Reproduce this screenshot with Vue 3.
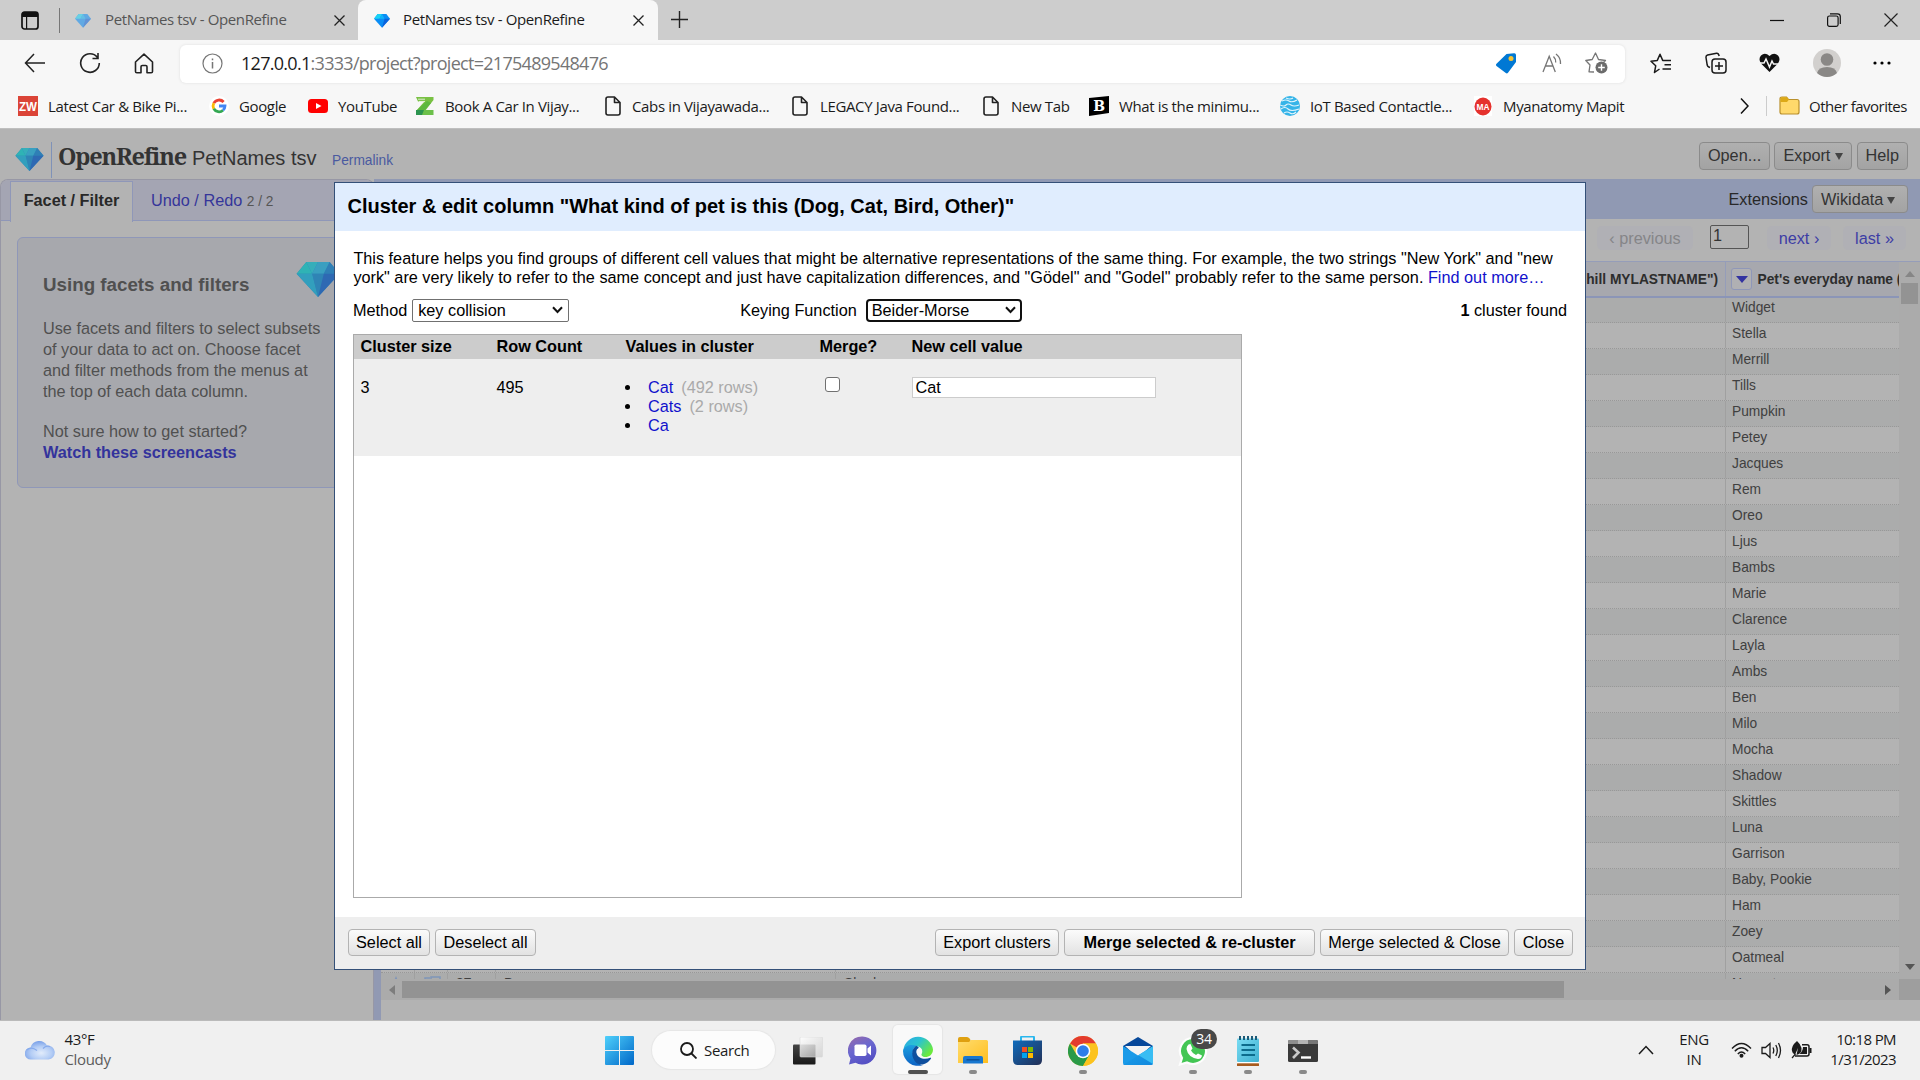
<script setup>
const bookmarks = [
  { icon: 'zw', label: 'Latest Car & Bike Pi...', w: 191, s: 30 },
  { icon: 'google', label: 'Google', w: 99, s: 30 },
  { icon: 'youtube', label: 'YouTube', w: 108, s: 30 },
  { icon: 'zed', label: 'Book A Car In Vijay...', w: 189, s: 29 },
  { icon: 'page', label: 'Cabs in Vijayawada...', w: 187, s: 27 },
  { icon: 'page', label: 'LEGACY Java Found...', w: 191, s: 28 },
  { icon: 'page', label: 'New Tab', w: 106, s: 28 },
  { icon: 'bee', label: 'What is the minimu...', w: 191, s: 30 },
  { icon: 'iot', label: 'IoT Based Contactle...', w: 194, s: 30 },
  { icon: 'ma', label: 'Myanatomy Mapit', w: 180, s: 29 },
]
const pets = ['Widget', 'Stella', 'Merrill', 'Tills', 'Pumpkin', 'Petey', 'Jacques', 'Rem', 'Oreo', 'Ljus', 'Bambs', 'Marie', 'Clarence', 'Layla', 'Ambs', 'Ben', 'Milo', 'Mocha', 'Shadow', 'Skittles', 'Luna', 'Garrison', 'Baby, Pookie', 'Ham', 'Zoey', 'Oatmeal', 'Nugget']
const values = [
  { name: 'Cat', rows: '(492 rows)' },
  { name: 'Cats', rows: '(2 rows)' },
  { name: 'Ca', rows: '' },
]
</script>

<template>
  <div class="screen">
    <svg class="defs" width="0" height="0">
      <defs>
        <symbol id="gem" viewBox="0 0 44 36">
          <path d="M10 0H34L44 12 22 36 0 12z" fill="#2f86b8" />
          <path d="M10 0 16 12H0z" fill="#2fb3b5" /><path d="M10 0H22L16 12z" fill="#36aeba" />
          <path d="M22 0H34L28 12H16z" fill="#3a9fc0" /><path d="M34 0 44 12H28z" fill="#2f7fb6" />
          <path d="M0 12H16L22 36z" fill="#329fbd" /><path d="M16 12H28L22 36z" fill="#2f84b5" />
          <path d="M28 12H44L22 36z" fill="#2e69b3" />
        </symbol>
        <symbol id="favgem" viewBox="0 0 44 40">
          <path d="M10 2H34L44 15 22 40 0 15z" fill="#0a8df5" />
          <path d="M10 2 0 15H15L22 2z" fill="#19d3f5" /><path d="M22 2 15 15H29z" fill="#10b4f8" />
          <path d="M29 15H44L22 40z" fill="#0b63dc" />
        </symbol>
        <linearGradient id="gWin" x1="0" y1="0" x2="1" y2="1"><stop offset="0" stop-color="#4fd0fb" /><stop offset="1" stop-color="#0067c8" /></linearGradient>
        <linearGradient id="gTask" x1="0" y1="0" x2="0" y2="1"><stop offset="0" stop-color="#444" /><stop offset="1" stop-color="#191919" /></linearGradient>
        <linearGradient id="gPane" x1="0" y1="0" x2="1" y2="1"><stop offset="0" stop-color="#fff" stop-opacity=".9" /><stop offset="1" stop-color="#ccc" stop-opacity=".7" /></linearGradient>
        <linearGradient id="gChat" x1="0" y1="0" x2=".5" y2="1"><stop offset="0" stop-color="#9a6aa8" /><stop offset=".5" stop-color="#6a67cf" /><stop offset="1" stop-color="#5550c4" /></linearGradient>
        <linearGradient id="gEdge" x1="0" y1="0" x2="1" y2=".6"><stop offset="0" stop-color="#2aa7e6" /><stop offset=".5" stop-color="#2cc3cf" /><stop offset="1" stop-color="#6bea3c" /></linearGradient>
        <linearGradient id="gEdge2" x1="0" y1="0" x2="0" y2="1"><stop offset="0" stop-color="#1ca0e0" /><stop offset="1" stop-color="#0d62c4" /></linearGradient>
        <linearGradient id="gFold" x1="0" y1="0" x2="1" y2="1"><stop offset="0" stop-color="#ffdc6e" /><stop offset="1" stop-color="#ffbe1e" /></linearGradient>
        <linearGradient id="gStore" x1="0" y1="0" x2="1" y2="1"><stop offset="0" stop-color="#0f6cbd" /><stop offset="1" stop-color="#232f55" /></linearGradient>
        <linearGradient id="gMail" x1="0" y1="0" x2="1" y2="1"><stop offset="0" stop-color="#1aa2ec" /><stop offset="1" stop-color="#1288dd" /></linearGradient>
        <linearGradient id="gNote" x1="0" y1="0" x2="1" y2="1"><stop offset="0" stop-color="#79dcf3" /><stop offset="1" stop-color="#3fb0d0" /></linearGradient>
        <radialGradient id="gCloud" cx=".55" cy=".65" r=".7"><stop offset="0" stop-color="#e2ecfb" /><stop offset=".5" stop-color="#b4cdf5" /><stop offset="1" stop-color="#6e98e6" /></radialGradient>
      </defs>
    </svg>

    <header class="tabbar">
      <svg class="ws" width="18" height="19" viewBox="0 0 18 19"><rect x="1" y="1" width="16" height="17" rx="2.5" fill="none" stroke="#111" stroke-width="1.7" /><path d="M1 5V3q0-2 2-2h12q2 0 2 2v3H1zM5 6h1.200v12H5z" fill="#111" /></svg>
      <i class="tabsep"></i>
      <div class="tab idle">
        <svg width="16" height="15" opacity=".55"><use href="#favgem" /></svg><span>PetNames tsv - OpenRefine</span>
        <svg class="x" width="11" height="11" viewBox="0 0 11 11"><path d="M.5.5l10 10M10.500.5l-10 10" stroke="#222" stroke-width="1.300" /></svg>
      </div>
      <div class="tab live">
        <svg width="16" height="15"><use href="#favgem" /></svg><span>PetNames tsv - OpenRefine</span>
        <svg class="x" width="11" height="11" viewBox="0 0 11 11"><path d="M.5.5l10 10M10.500.5l-10 10" stroke="#222" stroke-width="1.300" /></svg>
      </div>
      <svg class="plus" width="17" height="17" viewBox="0 0 17 17"><path d="M8.500 0v17M0 8.500h17" stroke="#222" stroke-width="1.400" /></svg>
      <div class="winctl">
        <svg width="14" height="14" viewBox="0 0 14 14"><path d="M0 7.500h14" stroke="#111" stroke-width="1.200" /></svg>
        <svg width="14" height="14" viewBox="0 0 14 14" fill="none" stroke="#111" stroke-width="1.200"><rect x=".6" y="3" width="10.500" height="10.400" rx="1.800" /><path d="M3 .8h7.500q2.800 0 2.800 2.800V11" /></svg>
        <svg width="14" height="14" viewBox="0 0 14 14"><path d="M.5.5l13 13M13.500.5l-13 13" stroke="#222" stroke-width="1.200" /></svg>
      </div>
    </header>

    <div class="toolbar">
      <div class="nav">
        <svg width="22" height="20" viewBox="0 0 22 20" fill="none" stroke="#222" stroke-width="1.500"><path d="M21 10H1.500M10 1 1.500 10 10 19" /></svg>
        <svg width="22" height="22" viewBox="0 0 22 22" fill="none" stroke="#222" stroke-width="1.600"><path d="M18.500 5.500A9.300 9.300 0 1 0 20.300 11M19 1v5.500h-5.500" /></svg>
        <svg width="20" height="21" viewBox="0 0 20 21" fill="none" stroke="#222" stroke-width="1.600" stroke-linejoin="round"><path d="M1.500 9 10 1.200 18.500 9v9.500q0 1.300-1.300 1.300H13v-6q0-1.300-1.300-1.300H8.300Q7 12.500 7 13.800v6H2.800q-1.300 0-1.300-1.300z" /></svg>
      </div>
      <div class="address">
        <svg width="21" height="21" viewBox="0 0 21 21" fill="none" stroke="#767676" stroke-width="1.200"><circle cx="10.500" cy="10.500" r="9.500" /><path d="M10.500 9v6.500M10.500 5.500v1.800" stroke-width="1.500" /></svg>
        <span class="url"><b>127.0.0.1</b>:3333/project?project=2175489548476</span>
        <svg class="tag" width="22" height="21" viewBox="0 0 22 21"><path d="M11.500 1 19 .2q2-.2 2 1.800V9L13 19.800q-1 1.300-2.200.3L1.500 13q-1-1 0-2.200z" fill="#0078d4" /><circle cx="16" cy="5.500" r="2.500" fill="#f5c433" /></svg>
        <svg width="20" height="20" viewBox="0 0 20 20" fill="none" stroke="#767676" stroke-width="1.300"><path d="M1 19 7.200 3.200 13.300 19M3.300 13h8M11.500 3.500q2.500 2.500 2.200 6M14 1q5 4 4.500 10" /></svg>
        <svg class="fav" width="23" height="22" viewBox="0 0 23 22"><path d="M9 20 4 19.800 5 13 .8 8.500 7.200 7.500 10.500 1 13.500 7.500 20.500 8.500 18 11" fill="none" stroke="#767676" stroke-width="1.300" stroke-linejoin="round" /><circle cx="16.500" cy="15.500" r="6" fill="#6b6b6b" /><path d="M16.500 12.200v6.600M13.200 15.500h6.600" stroke="#fff" stroke-width="1.400" /></svg>
      </div>
      <div class="tools">
        <svg width="22" height="21" viewBox="0 0 22 21" fill="none" stroke="#1b1b1b" stroke-width="1.500" stroke-linejoin="round"><path d="M9.500 16 4.500 19.500 5.700 12.800 1 8.300 7.300 7.400 10 1.200 12.700 7.400H21M14.500 11.800H21M12.500 16H21" /></svg>
        <svg width="22" height="22" viewBox="0 0 22 22" fill="none" stroke="#1b1b1b" stroke-width="1.500"><rect x="7" y="7" width="14" height="14" rx="3" /><path d="M14 10v8M10 14h8M5 15.500 3.800 15Q2.500 14.500 2.200 13L1 5.500Q.8 3.500 2.600 3L11.500 1.200Q13.500 1 14.200 4" /></svg>
        <svg width="21" height="20" viewBox="0 0 21 20"><path d="M10.500 19 2 10.500Q-1 6 2 2.500 6-1 10.500 3 15-1 19 2.500 22 6 19 10.500z" fill="#111" /><path d="M0 10h5l2-4 3.500 8 2.500-6 1.500 3H21" fill="none" stroke="#f7f7f7" stroke-width="1.500" /></svg>
        <svg width="28" height="28" viewBox="0 0 28 28"><circle cx="14" cy="14" r="14" fill="#d2d0ce" /><circle cx="14" cy="10.500" r="6.300" fill="#8a8886" /><path d="M4 24Q5.500 18 14 18t10 6q-4.500 4-10 4T4 24z" fill="#8a8886" /></svg>
        <svg width="18" height="4" viewBox="0 0 18 4"><circle cx="2" cy="2" r="1.600" /><circle cx="9" cy="2" r="1.600" /><circle cx="16" cy="2" r="1.600" /></svg>
      </div>
    </div>

    <nav class="bookmarks">
      <div v-for="b in bookmarks" :key="b.label" class="bm" :style="{ width: b.w + 'px' }">
        <span class="bicon" :style="{ width: b.s + 'px' }">
          <svg v-if="b.icon === 'zw'" width="20" height="20"><rect width="20" height="20" fill="#db4437" /><text x="10" y="14.500" text-anchor="middle" textLength="18" lengthAdjust="spacingAndGlyphs" class="logo" fill="#fff" font-size="13">ZW</text></svg>
          <svg v-else-if="b.icon === 'google'" width="20" height="20" viewBox="0 0 20 20"><circle cx="10" cy="10" r="10" fill="#fff" /><g fill="none" stroke-width="2.800"><path d="M14.600 6A6 6 0 0 0 4.800 7.200" stroke="#ea4335" /><path d="M4.800 7.200a6 6 0 0 0 0 5.600" stroke="#fbbc05" /><path d="M4.800 12.800a6 6 0 0 0 9.200 1.500" stroke="#34a853" /><path d="M14 14.300A6 6 0 0 0 16 10h-6" stroke="#4285f4" /></g></svg>
          <svg v-else-if="b.icon === 'youtube'" width="21" height="20" viewBox="0 0 21 20"><rect y="3" width="20" height="14" rx="3.500" fill="#f00" /><path d="M8 7v6l5.500-3z" fill="#fff" /></svg>
          <svg v-else-if="b.icon === 'zed'" width="19" height="18" viewBox="0 0 19 18"><path d="M0 0h17.500v3L9 14H0L8.500 4.500H2z" fill="#79c143" /><path d="M2 2.200h7M3 4.400h6" stroke="#f7f7f7" stroke-width=".8" /><path d="M11 4 0 14v4h11v-4H8l7-8z" fill="#5db83f" /><path d="M0 13h8v5H0z" fill="#2c9450" /><path d="M8 13h9.500v5H6z" fill="#6cc04a" /></svg>
          <svg v-else-if="b.icon === 'page'" width="16" height="20" viewBox="0 0 16 20" fill="none" stroke="#222" stroke-width="1.600" stroke-linejoin="round"><path d="M3 1h6.500L15 6.500V17q0 2-2 2H3q-2 0-2-2V3q0-2 2-2zM9.500 1v5.500H15" /></svg>
          <svg v-else-if="b.icon === 'bee'" width="20" height="20" viewBox="0 0 20 20"><path d="M0 2 20 0V17L0 20z" fill="#000" /><text x="10" y="15" text-anchor="middle" class="slab" fill="#fff" font-size="14">B</text></svg>
          <svg v-else-if="b.icon === 'iot'" width="20" height="20" viewBox="0 0 20 20"><circle cx="10" cy="10" r="10" fill="#35b4e8" /><path d="M2 5q4-2 7 0t8-1M0 9q4 2 6 0t5 0 8 0M1 13q4-3 7 0t11 0M4 17q3-2 6 0t6-1M6 2q4 2 7 0" fill="none" stroke="#e3f5fc" stroke-width="1.100" /></svg>
          <svg v-else width="18" height="20" viewBox="0 0 18 20"><rect width="18" height="20" fill="#fff" /><ellipse cx="9" cy="10.500" rx="8.500" ry="9" fill="#e5312d" /><text x="9" y="14" text-anchor="middle" class="logo" fill="#fff" font-size="9.500" textLength="13" lengthAdjust="spacingAndGlyphs">MA</text></svg>
        </span><span>{{ b.label }}</span>
      </div>
      <svg class="more" width="9" height="16" viewBox="0 0 9 16"><path d="M1 .5 8 8 1 15.500" fill="none" stroke="#111" stroke-width="1.500" /></svg>
      <i class="bmsep"></i>
      <svg class="bfold" width="21" height="19" viewBox="0 0 21 19"><path d="M1 3q0-2 2-2h4.500l2 2.500H18q2 0 2 2V16q0 2-2 2H3q-2 0-2-2z" fill="#ffd96b" stroke="#b9902c" stroke-width="1.200" /><path d="M1.500 6H8l2-2.500L8 1.200H3Q1.500 1.200 1.500 3z" fill="#dca918" /></svg>
      <span class="other">Other favorites</span>
    </nav>

    <main class="page">
      <div class="apphead">
        <svg class="biggem" width="29" height="23"><use href="#gem" width="29" height="23" /></svg>
        <i class="rule"></i>
        <span class="brand">OpenRefine</span>
        <span class="project">PetNames tsv</span>
        <span class="perma">Permalink</span>
        <div class="headbtns">
          <span class="dbtn">Open...</span><span class="dbtn">Export <i class="tri"></i></span><span class="dbtn">Help</span>
        </div>
      </div>

      <div class="body">
        <aside class="left">
          <div class="ltabs">
            <div class="facet">Facet / Filter</div>
            <div class="undo">Undo / Redo <small>2 / 2</small></div>
          </div>
          <div class="help">
            <h2>Using facets and filters</h2>
            <svg class="helpgem" width="44" height="35"><use href="#gem" width="44" height="35" /></svg>
            <p>Use facets and filters to select subsets<br>of your data to act on. Choose facet<br>and filter methods from the menus at<br>the top of each data column.</p>
            <p class="p2">Not sure how to get started?<br><b>Watch these screencasts</b></p>
          </div>
        </aside>
        <div class="splitter"></div>
        <section class="right">
          <div class="band"><span>Extensions</span><span class="dbtn wiki">Wikidata <i class="tri"></i></span></div>
          <div class="pager">
            <span class="pg prev">‹ previous</span><span class="pin">1</span><span class="pg next">next ›</span><span class="pg last">last »</span>
          </div>
          <div class="grid">
            <div class="table">
              <div class="thead">
                <div class="c1">hill MYLASTNAME")</div>
                <div class="c2"><i class="dd"><i></i></i><span>Pet's everyday name (</span></div>
              </div>
              <div class="rows">
                <div v-for="(p, i) in pets" :key="p" class="row" :class="{ odd: i % 2 === 0 }">
                  <div class="r0"><svg v-if="i === 26" width="14" height="14" viewBox="0 0 14 14"><path d="M7 0l2 5h5l-4 3 2 6-5-4-5 4 2-6-4-3h5z" fill="#7f95b8" /></svg></div>
                  <div class="r1"><svg v-if="i === 26" width="18" height="14" viewBox="0 0 18 14"><path d="M1 13V2h5M7 5V1h9v5" fill="none" stroke="#7f95b8" stroke-width="1.500" /></svg></div>
                  <div class="r2"><template v-if="i === 26">27.</template></div><div class="r3"><template v-if="i === 26">Dog</template></div><div class="r4"><template v-if="i === 26">Shadow</template></div>
                  <div class="r5">{{ p }}</div>
                </div>
              </div>
            </div>
            <div class="vbar"><i class="up"></i><i class="vthumb"></i><i class="down"></i></div>
          </div>
          <div class="hbar"><i class="la"></i><i class="hthumb"></i><i class="ra"></i><i class="corner"></i></div>
        </section>
      </div>

      <div class="modal">
        <div class="mtitle">Cluster &amp; edit column "What kind of pet is this (Dog, Cat, Bird, Other)"</div>
        <div class="mbody">
          <p class="intro">This feature helps you find groups of different cell values that might be alternative representations of the same thing. For example, the two strings "New York" and "new<br>york" are very likely to refer to the same concept and just have capitalization differences, and "Gödel" and "Godel" probably refer to the same person. <a>Find out more…</a></p>
          <div class="opts">
            <span>Method</span>
            <span class="sel">key collision<svg width="11" height="8" viewBox="0 0 11 8"><path d="M1 1.200 5.500 6 10 1.200" fill="none" stroke="#111" stroke-width="2" /></svg></span>
            <span class="kf">Keying Function</span>
            <span class="sel focus">Beider-Morse<svg width="11" height="8" viewBox="0 0 11 8"><path d="M1 1.200 5.500 6 10 1.200" fill="none" stroke="#111" stroke-width="2" /></svg></span>
            <span class="found"><b>1</b> cluster found</span>
          </div>
          <div class="ctable">
            <div class="chead"><span>Cluster size</span><span>Row Count</span><span>Values in cluster</span><span>Merge?</span><span>New cell value</span></div>
            <div class="crow">
              <span>3</span><span>495</span>
              <ul><li v-for="v in values" :key="v.name"><a>{{ v.name }}</a><em>{{ v.rows }}</em></li></ul>
              <span><i class="check"></i></span>
              <span class="cin">Cat</span>
            </div>
          </div>
        </div>
        <div class="mfoot">
          <span class="btn b1">Select all</span><span class="btn b2">Deselect all</span>
          <span class="btn b3">Export clusters</span><span class="btn b4">Merge selected &amp; re-cluster</span><span class="btn b5">Merge selected &amp; Close</span><span class="btn b6">Close</span>
        </div>
      </div>
    </main>

    <footer class="taskbar">
      <div class="weather">
        <svg width="30" height="20" viewBox="0 0 30 20"><path d="M6 19.500a6 6 0 0 1-.5-12A9 9 0 0 1 22 5.500a7 7 0 0 1 1.500 14z" fill="url(#gCloud)" /><path d="M1.500 10q5-4 10.500.5M18 8.500q3-3.500 7-2" fill="none" stroke="#86aaec" stroke-width="1.200" /></svg>
        <div><span>43°F</span><span class="dim">Cloudy</span></div>
      </div>
      <div class="apps">
        <div class="app win"><svg width="29" height="29" viewBox="0 0 29 29"><path d="M1 0h13v14H0V1q0-1 1-1zM15 0h13q1 0 1 1v13H15zM0 15h14v14H1q-1 0-1-1zM15 15h14v13q0 1-1 1H15z" fill="url(#gWin)" /></svg></div>
        <div class="search"><svg width="17" height="17" viewBox="0 0 17 17" fill="none" stroke="#1b1b1b" stroke-width="1.800"><circle cx="7" cy="7" r="6" /><path d="M11.500 11.500 16.500 16.500" /></svg>Search</div>
        <div class="app"><svg width="30" height="28" viewBox="0 0 30 28"><rect y="7.500" width="22.500" height="20" rx="1" fill="url(#gTask)" /><rect x="7" width="22.500" height="20" rx="1" fill="url(#gPane)" stroke="#d8d8d8" stroke-width=".6" /></svg></div>
        <div class="app"><svg width="29" height="29" viewBox="0 0 29 29"><path d="M14.500.5a14 14 0 1 1-7 26.200L1 28.500l1.500-6A14 14 0 0 1 14.500.5z" fill="url(#gChat)" /><rect x="6.500" y="8.500" width="12" height="11.500" rx="1.800" fill="#fff" /><path d="M19.500 12.500 23 9.500v10l-3.500-3z" fill="#fff" /></svg></div>
        <div class="app cur"><svg width="30" height="30" viewBox="0 0 30 30"><path d="M.3 14A15 15 0 0 1 30 13.500C30 18.500 26 21 22.500 21S17.700 19.200 18.800 17.500C20.500 14.500 18 10 12 10 6 9.500 1.500 12 .3 16z" fill="url(#gEdge)" /><path d="M0 15C1.500 8.500 9 8 13.500 9.800 9.500 12 9 17 11 21.500 13 26 18 29.500 20 29A15 15 0 0 1 0 15z" fill="url(#gEdge2)" /><path d="M13 9.800C7.500 14 8.500 22 13 26.500 18 31 25 27.500 28 22.500c.3-.8-.3-1-.8-.8C22 24 14.500 22.500 13.500 17c-.3-2 .8-4 2.500-5q-1-1.700-3-2.200z" fill="#0f4f9e" /><path d="M14 13.200Q18 10.500 18.900 14.500 19 16.300 18 18q-.5 2 2.500 2.900-7-.4-7-6.200z" fill="#f8f8f8" /></svg><i class="bar"></i></div>
        <div class="app"><svg width="30" height="27" viewBox="0 0 30 27"><path d="M0 2q0-2 2-2h7q1.500 0 2.500 1.500L12.500 3V8H0z" fill="#dfa010" /><path d="M0 5h11l2-2h15.500q1.500 0 1.500 1.500V26H0z" fill="url(#gFold)" /><path d="M5 26.500V21q0-2 2-2h16q2 0 2 2v5.500z" fill="#1877cf" /><path d="M8.500 22.800h13" stroke="#0c4f94" stroke-width="1.400" /></svg><i class="dot"></i></div>
        <div class="app"><svg width="29" height="29" viewBox="0 0 29 29"><path d="M8 6V1.500q0-1 1-1h11q1 0 1 1V6" fill="none" stroke="#29b7ee" stroke-width="2" /><path d="M0 4.500h29V24q0 5-5 5H5q-5 0-5-5z" fill="url(#gStore)" /><rect x="9" y="11" width="5" height="5" fill="#f25022" /><rect x="15" y="11" width="5" height="5" fill="#7fba00" /><rect x="9" y="17" width="5" height="5" fill="#00a4ef" /><rect x="15" y="17" width="5" height="5" fill="#ffb900" /></svg></div>
        <div class="app"><svg width="30" height="30" viewBox="0 0 30 30"><circle cx="15" cy="15" r="15" fill="#fcc934" /><path d="M15 15 2 7.500A15 15 0 0 1 28 7.500H15z" fill="#e33b2e" /><path d="M2 7.500A15 15 0 0 0 15 30L21.500 18.700 15 15 8.500 18.700z" fill="#2a9a47" /><path d="M15 30A15 15 0 0 0 28 7.500H15l6.500 11.300z" fill="#fcc31e" /><circle cx="15" cy="15" r="7.300" fill="#fff" /><circle cx="15" cy="15" r="5.800" fill="#2f7de9" /></svg><i class="dot"></i></div>
        <div class="app"><svg width="30" height="28" viewBox="0 0 30 28"><path d="M0 9 15 0 30 9V14H0z" fill="#07489a" /><path d="M2 9h26L15 21z" fill="#f4f4f4" /><path d="M0 9 30 28H2q-2 0-2-2z" fill="#1a9ae8" /><path d="M30 9 0 28H28q2 0 2-2z" fill="url(#gMail)" /><path d="M30 9 15.500 18.300 30 27z" fill="#38bdf3" /></svg></div>
        <div class="app"><svg width="30" height="30" viewBox="0 0 30 30"><path d="M15 2A13 13 0 1 1 9 26.500L2 28.500 4 22A13 13 0 0 1 15 2z" fill="#43c654" stroke="#fdfdfd" stroke-width="2.200" /><path d="M10.500 8.500 12.500 8 14.500 12.500 13 14.500Q15 18 18 19L20 17.500 24 19.500Q23.500 23 20 23 10 21.500 8.500 13 8.500 10 10.500 8.500z" fill="#fff" /></svg><b class="badge">34</b><i class="dot"></i></div>
        <div class="app"><svg width="22" height="30" viewBox="0 0 22 30"><rect y="27" width="22" height="3" rx=".5" fill="#a75b1f" /><rect y="25" width="22" height="2.300" fill="#fff" /><rect y="2.500" width="22" height="23.500" rx="1" fill="url(#gNote)" /><path d="M4.500 9h13.500M4.500 14h13.500M4.500 19h13.500" stroke="#0c6c8c" stroke-width="1.800" /><path d="M3 0v4M7 0v4M11 0v4M15 0v4M19 0v4" stroke="#1b5a78" stroke-width="2" /></svg><i class="dot"></i></div>
        <div class="app"><svg width="30" height="22" viewBox="0 0 30 22"><rect width="30" height="22" rx="1.500" fill="#3a3a3a" /><path d="M0 4V1.500Q0 0 1.500 0H10v4z" fill="#8e8e8e" /><path d="M10 0h10v4H10z" fill="#b4b4b4" /><path d="M20 0h8.500Q30 0 30 1.500V4H20z" fill="#777" /><path d="M5 7.500 10.500 12.500 5 18" fill="none" stroke="#c9c9c9" stroke-width="2.600" /><path d="M13 17.500h10" stroke="#fff" stroke-width="2.400" /></svg><i class="dot"></i></div>
      </div>
      <div class="tray">
        <svg class="chev" width="16" height="10" viewBox="0 0 16 10"><path d="M1 9 8 1.500 15 9" fill="none" stroke="#1b1b1b" stroke-width="1.500" /></svg>
        <div class="lang"><span>ENG</span><span>IN</span></div>
        <svg class="wifi" width="21" height="16" viewBox="0 0 21 16" fill="none" stroke="#1b1b1b" stroke-width="1.400"><path d="M1 6.500q9.500-10 19 0M3.800 9.300q6.700-7 13.400 0M6.800 12q3.700-4 7.400 0" /><circle cx="10.500" cy="13.800" r="1.300" fill="#1b1b1b" /></svg>
        <svg class="vol" width="21" height="17" viewBox="0 0 21 17" fill="none" stroke="#1b1b1b" stroke-width="1.300"><path d="M1 5.500h3.500L9 1.500v14L4.500 11.500H1zM12 5.500q1.500 3 0 6M14.800 3q3 5.500 0 11M17.500 1q4 7.500 0 15" /></svg>
        <svg class="bat" width="21" height="18" viewBox="0 0 21 18"><path d="M11 3.800h5q2 0 2 2V13q0 2-2 2H4" fill="none" stroke="#1b1b1b" stroke-width="1.500" /><path d="M18.500 7H20.500v5h-2zM12 6h4v7H8.500Q12 10 12 6z" fill="#1b1b1b" /><path d="M6 0Q0 5 1 10q.4 2.800 3 3.800L7 7 5.500 14Q11 12.500 10.500 7 9.500 3 6 0z" fill="#1b1b1b" /><path d="M1 17 4.500 13" stroke="#1b1b1b" stroke-width="1.200" /></svg>
        <div class="clock"><span>10:18 PM</span><span>1/31/2023</span></div>
      </div>
    </footer>
  </div>
</template>

<style>
body { margin: 0; overflow: hidden; }
</style>

<style scoped>
* { box-sizing: border-box; }
i, em { font-style: normal; }
svg { display: block; flex: none; }
.screen { width: 1920px; height: 1080px; display: flex; flex-direction: column; overflow: hidden; font-family: "Open Sans", "Noto Sans", sans-serif; color: #1b1b1b; white-space: nowrap; }
.defs { position: absolute; }
.logo { font-family: "Liberation Sans", sans-serif; font-weight: bold; letter-spacing: 0; }
.slab { font-family: "DejaVu Serif", serif; font-weight: bold; }

.tabbar { height: 40px; background: #cdcdcd; display: flex; align-items: center; font-size: 15px; letter-spacing: -.38px; flex: none; }
.ws { margin-left: 21px; }
.tabsep { width: 1px; height: 25px; background: #777; margin-left: 20px; }
.tab { display: flex; align-items: center; height: 40px; }
.tab span { margin: -2px 0 0 14px; flex: 1; }
.tab .x { margin-right: 13px; }
.idle { width: 298px; padding-left: 15px; color: #555; }
.live { width: 300px; padding-left: 15px; background: #f7f7f7; border-radius: 8px 8px 0 0; }
.live svg:first-child { margin-right: -1px; margin-left: 1px; }
.live .x { margin-right: 14px; }
.plus { margin-left: 13px; margin-top: -2px; }
.winctl { margin-left: auto; display: flex; gap: 43px; margin: -1px 22px 0 auto; }

.toolbar { height: 46px; background: #f7f7f7; display: flex; align-items: center; flex: none; }
.nav { width: 180px; display: flex; padding-left: 24px; gap: 33px; align-items: center; }
.address { width: 1445px; height: 38px; border-radius: 6px; background: #fff; box-shadow: 0 0 3px #ddd; display: flex; align-items: center; padding: 0 17px 0 22px; margin-top: 2px; }
.address > * { position: relative; top: -1px; }
.url { margin-left: 18px; font-size: 18px; letter-spacing: -.71px; color: #757575; }
.url b { font-weight: 400; color: #1b1b1b; }
.address .tag { margin-left: auto; }
.address svg + svg { margin-left: 25px; }
.address .fav { margin-left: 23px; }
.tools { display: flex; align-items: center; margin-left: 25px; gap: 32.500px; }

.bookmarks { height: 43px; background: #f7f7f7; border-bottom: 1px solid #bfbfbf; display: flex; align-items: center; font-size: 15px; letter-spacing: -.36px; padding-left: 18px; flex: none; padding-bottom: 3px; }
.bm { display: flex; align-items: center; flex: none; }
.bicon { display: block; flex: none; }
.more { margin-left: 86px; }
.bmsep { width: 1px; height: 20px; background: #ccc; margin-left: 17px; }
.bfold { margin-left: 12px; }
.other { margin-left: 9px; letter-spacing: -.5px; }

.page { height: 891px; position: relative; background: #b3b3b3; font-family: "Liberation Sans", Arial, sans-serif; font-size: 16.25px; flex: none; display: flex; flex-direction: column; overflow: hidden; }
.apphead { height: 50px; display: flex; align-items: center; flex: none; }
.biggem { margin: 11px 0 0 15px; }
.rule { width: 1px; height: 36px; background: #7f92b8; margin: 12px 0 0 7px; }
.brand { font-family: "Noto Serif", "DejaVu Serif Condensed", "DejaVu Serif", serif; font-stretch: condensed; font-weight: bold; font-size: 23.500px; color: #333; margin: 4px 0 0 6px; width: 134px; letter-spacing: -1.200px; }
.project { font-size: 20px; color: #333; margin-top: 8px; width: 140px; }
.perma { font-size: 13.75px; color: #4a5aa0; margin-top: 12px; }
.headbtns { margin: 3px 12px 0 auto; display: flex; gap: 4.200px; }
.dbtn { height: 28px; border: 1px solid #8b8b8b; border-radius: 4px; background: linear-gradient(#b0b0b0, #a3a3a3); color: #333; padding: 0 8px; display: inline-flex; align-items: center; }
.tri { border: 4.500px solid transparent; border-top: 7px solid #444; border-bottom: 0; margin: 2px 0 0 5px; }

.body { flex: 1; display: flex; min-height: 0; }
.left { width: 374px; border: 1px solid #9797a5; border-bottom: 0; border-radius: 8px 8px 0 0; overflow: hidden; flex: none; }
.ltabs { height: 41px; background: #a4a5b3; border-bottom: 1px solid #8f97b8; display: flex; padding-left: 9px; }
.facet { width: 123px; height: 41px; background: #b3b3b3; border: 1px solid #8f97b8; border-bottom: 0; font-weight: bold; color: #282828; display: flex; align-items: center; justify-content: center; padding-bottom: 3px; margin-top: 1px; }
.undo { color: #35359a; padding: 11px 0 0 18px; }
.undo small { font-size: 13.75px; color: #555; }
.help { margin: 16px -8px 0 16px; height: 251px; border: 1px solid #8f97b8; border-radius: 6px; background: #a7a8ad; padding: 0 25px; color: #505050; position: relative; line-height: 21.130px; }
.help h2 { font-size: 18.750px; margin: 0; padding-top: 36px; line-height: 22px; }
.helpgem { position: absolute; left: 278px; top: 24px; }
.help p { margin: 22px 0 0; }
.help .p2 { margin-top: 18px; }
.help b { color: #33339c; }
.splitter { width: 7px; background: #9199b3; flex: none; }
.right { flex: 1; min-width: 0; display: flex; flex-direction: column; }
.band { height: 40px; background: #9099b3; display: flex; align-items: center; justify-content: flex-end; padding-right: 12px; color: #282828; gap: 4px; }
.wiki { padding: 0 0 0 8px; width: 96px; }
.wiki .tri { margin-left: 4px; }
.pager { height: 43px; display: flex; align-items: center; justify-content: flex-end; padding: 0 14px 5px 0; border-bottom: 1px solid #959db9; flex: none; }
.pg { height: 24px; line-height: 25px; background: #b0b0b5; border-radius: 5px; color: #3d3da5; text-align: center; }
.prev { width: 96px; color: #858588; }
.next { width: 64px; }
.last { width: 63px; margin-left: 12px; }
.pin { width: 39px; height: 24px; border: 1px solid #555; margin: -1px 18px 0 17px; padding: 0 2px; color: #333; border-radius: 2px; }
.grid { height: 717px; display: flex; flex: none; }
.table { width: 1518px; overflow: hidden; }
.thead { height: 36px; background: #a7a8ae; border-bottom: 2px solid #8b95b7; display: flex; justify-content: flex-end; align-items: stretch; font-size: 13.75px; font-weight: bold; color: #2d2d2d; }
.c1 { padding: 10px 7px 0 0; }
.c2 { width: 174px; border-left: 1px solid #959db9; display: flex; align-items: center; padding-left: 5px; overflow: hidden; }
.c2 span { margin-left: 5.500px; flex: none; }
.dd { width: 21px; height: 22px; border: 1px solid #8f97b8; border-radius: 3px; background: #b0b0b3; display: flex; align-items: center; justify-content: center; flex: none; }
.dd i { border: 6px solid transparent; border-top: 7px solid #3333a0; border-bottom: 0; }
.rows { overflow: hidden; height: 681px; }
.row { height: 26px; border-bottom: 1px dotted #989898; display: flex; font-size: 13.75px; color: #404040; }
.row > div { border-right: 1px solid #a0a0a0; flex: none; padding: 3px 0 0 8px; }
.row.odd { background: #abacac; }
.row:first-child > div { padding-top: 2px; }
.row:first-child { height: 25px; }
.row > .r0 { width: 34px; } .row > .r1 { width: 33px; padding-left: 9px; } .row > .r2 { width: 48px; font-weight: bold; } .row > .r3 { width: 340px; } .row > .r4 { width: 890px; }
.row > .r5 { width: 173px; border: 0; padding-left: 6px; }
.vbar { width: 21px; background: #ababab; display: flex; flex-direction: column; align-items: center; }
.up { border: 5px solid transparent; border-bottom: 6px solid #868686; border-top: 0; margin-top: 9px; }
.vthumb { width: 17px; height: 21px; background: #939393; margin-top: 6px; }
.down { border: 5px solid transparent; border-top: 6px solid #555; border-bottom: 0; margin-top: auto; margin-bottom: 9px; }
.hbar { height: 21px; background: #ababab; display: flex; align-items: center; flex: none; }
.la { border: 5px solid transparent; border-right: 6px solid #7d7d7d; border-left: 0; margin-left: 8px; }
.hthumb { width: 1162px; height: 17px; background: #939393; margin-left: 7px; }
.ra { border: 5px solid transparent; border-left: 6px solid #555; border-right: 0; margin-left: auto; margin-right: 8px; }
.corner { width: 21px; height: 21px; background: #9e9e9e; }

.modal { position: absolute; left: 334px; top: 53px; width: 1252px; height: 788px; background: #fff; border: 1px solid #345078; color: #000; display: flex; flex-direction: column; }
.mtitle { height: 48px; background: #e0edfe; font-weight: bold; font-size: 20px; padding: 12px 0 0 12.500px; flex: none; }
.mbody { flex: 1; padding: 18px 18px 0; display: flex; flex-direction: column; }
.intro { margin: 0; line-height: 19px; padding-left: .4px; }
.mbody a { color: #11c; }
.opts { display: flex; align-items: center; margin-top: 11px; height: 24px; }
.sel { width: 157px; height: 23px; border: 1px solid #707070; border-radius: 2px; margin-left: 5px; display: flex; align-items: center; justify-content: space-between; padding: 0 5px; }
.focus { width: 156px; border: 2px solid #101010; border-radius: 4px; margin-left: 9px; padding: 0 4px; }
.kf { margin-left: 171px; }
.found { margin-left: auto; }
.ctable { width: 889px; height: 564px; border: 1px solid #aaa; margin-top: 12px; }
.chead, .crow { display: grid; grid-template-columns: 136px 129px 194px 92px 1fr; padding-left: 6.500px; }
.chead { height: 24px; background: #ccc; font-weight: bold; line-height: 23px; }
.crow { height: 97px; background: #eee; padding-top: 18px; line-height: 19px; align-items: start; }
.crow > span:nth-child(-n + 2), .crow ul { padding-top: 1px; }
.crow ul { margin: 0; padding-left: 22.500px; list-style: none; }
.crow li::before { content: ""; float: left; width: 5px; height: 5px; border-radius: 50%; background: #000; margin: 7px 0 0 -23px; }
.crow em { color: #aaa; margin-left: 8px; }
.check { display: block; width: 15px; height: 15px; border: 1.200px solid #707070; border-radius: 3px; background: #fff; margin-left: 5px; margin-top: 0; }
.cin { width: 244px; height: 21px; background: #fff; border: 1px solid #ccc; padding-left: 3px; }
.mfoot { height: 52px; background: #eee; display: flex; align-items: center; padding: 0 12px 1px 13px; flex: none; }
.btn { height: 27px; border: 1px solid #b3b3b3; border-radius: 4px; background: linear-gradient(#fbfbfb, #e2e2e2); display: flex; align-items: center; justify-content: center; margin-right: 5px; }
.b1 { width: 82px; } .b2 { width: 101px; } .b3 { width: 124px; margin-left: auto; } .b4 { width: 251px; font-weight: bold; } .b5 { width: 189px; } .b6 { width: 59px; margin-right: 0; }

.taskbar { height: 60px; background: #f0f0f0; border-top: 1px solid #bababa; display: flex; position: relative; font-size: 15px; letter-spacing: -.35px; }
.weather { width: 591px; display: flex; align-items: center; padding: 0 0 4px 25px; }
.weather svg { margin-top: 2px; }
.weather div { display: flex; flex-direction: column; margin-left: 9.500px; line-height: 20px; }
.dim { color: #5c5c5c; }
.apps { display: flex; height: 59px; }
.app { width: 55px; height: 59px; display: flex; align-items: center; justify-content: center; position: relative; }
.win svg { margin-left: 2px; }
.search { width: 123px; height: 38px; border-radius: 19px; background: #fcfcfc; box-shadow: 0 0 1px 1px #e6e6e6; margin: 10px 5px 0 6px; display: flex; align-items: center; gap: 7px; padding-left: 28px; }
.cur::before { content: ""; position: absolute; left: 3px; top: 4px; width: 49px; height: 49px; border-radius: 5px; background: #f9f9f9; box-shadow: 0 0 1px 1px #e5e5e5; }
.cur svg { position: relative; }
.dot, .bar { position: absolute; bottom: 6px; height: 4px; width: 8px; border-radius: 2px; background: #8a8a8a; left: 23.500px; }
.bar { width: 20px; background: #505050; left: 17.500px; }
.badge { position: absolute; left: 26px; top: 8px; width: 26px; height: 20px; border-radius: 10px; background: #484848; color: #fff; font-weight: 400; font-size: 14px; line-height: 20px; text-align: center; }
.tray { margin-left: auto; display: flex; align-items: center; padding-right: 24px; }
.lang, .clock { display: flex; flex-direction: column; line-height: 20px; margin-top: -4px; }
.lang { align-items: center; width: 40px; margin-left: 20px; }
.tray .chev, .wifi, .vol, .bat { margin-top: -1px; }
.wifi { margin-left: 17px; }
.vol { margin-left: 9px; }
.bat { margin-left: 9px; }
.clock { align-items: flex-end; width: 84px; letter-spacing: -.6px; }
</style>
